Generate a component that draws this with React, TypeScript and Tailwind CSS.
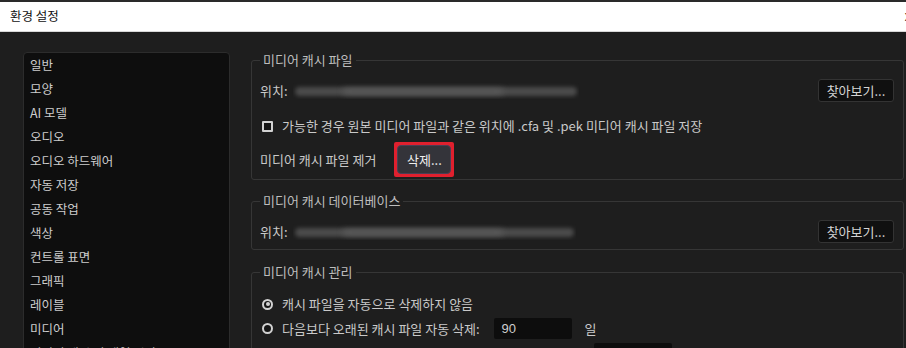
import React from "react";

const font = { fontFamily: '"Noto Sans CJK KR", "Noto Sans", sans-serif' };

const navItems = [
  "일반",
  "모양",
  "AI 모델",
  "오디오",
  "오디오 하드웨어",
  "자동 저장",
  "공동 작업",
  "색상",
  "컨트롤 표면",
  "그래픽",
  "레이블",
  "미디어",
  "미디어 캐시 및 배열 시간",
];

function BlurPath({ w }: { w: number }) {
  return (
    <div className="relative h-[16px] overflow-hidden" style={{ width: w }}>
      <div className="absolute inset-x-[2px] top-[4px] h-[9px] rounded-full bg-[#4c4c4c] blur-[2px]" />
      <div className="absolute left-[50px] top-[6px] h-[5px] w-[160px] rounded-full bg-[#5e5e5e] blur-[3px]" />
    </div>
  );
}

function BrowseButton() {
  return (
    <div className="ml-auto mr-[1px] flex h-[23px] w-[76px] items-center justify-center rounded-[3px] border border-[#333] bg-[#101010] text-[13px] text-[#d4d4d4]">
      찾아보기...
    </div>
  );
}

export default function App() {
  return (
    <div
      className="w-[906px] h-[348px] overflow-hidden bg-[#1e1e1e] text-[13px] text-[#c9c9c9]"
      style={font}
    >
      <div className="flex h-[32px] items-center justify-between border-t-2 border-t-[#2a2a2a] border-b border-b-[#d8d8d8] bg-white pl-[10px] text-[12.5px] text-[#111]">
        <span>환경 설정</span>
        <span className="mr-[-5px] text-[11px]">X</span>
      </div>
      <div className="flex pt-[20px]">
        <div className="ml-[23px] h-[320px] w-[207px] shrink-0 rounded-[4px] border border-[#2c2c2c] bg-[#0e0e0e] pl-[6px]">
          {navItems.map((t) => (
            <div key={t} className="flex h-[24px] items-center text-[12.5px] text-[#cdcdcd]">
              {t}
            </div>
          ))}
        </div>
        <div className="ml-[21px] mr-[2px] flex-1">
          <fieldset className="rounded-[3px] border border-[#363636] px-[8px] pb-[2px]">
            <legend className="px-[3px] leading-[16px] text-[#bdbdbd]">미디어 캐시 파일</legend>
            <div className="mt-[11px] flex h-[23px] items-center">
              <span className="text-[#c9c9c9]">위치:</span>
              <div className="ml-[5px]">
                <BlurPath w={286} />
              </div>
              <BrowseButton />
            </div>
            <div className="mt-[13px] flex h-[22px] items-center">
              <div className="ml-[2px] h-[11px] w-[11px] rounded-[1px] border-2 border-[#d2d2d2] bg-[#151515]" />
              <span className="ml-[9px]">가능한 경우 원본 미디어 파일과 같은 위치에 .cfa 및 .pek 미디어 캐시 파일 저장</span>
            </div>
            <div className="mt-[5px] flex h-[35px] items-center">
              <span>미디어 캐시 파일 제거</span>
              <div className="ml-[18px] flex h-[35px] w-[60px] items-center justify-center rounded-[2px] bg-[#e0202e] p-[3px]">
                <div className="flex h-full w-full items-center justify-center rounded-[4px] border border-[#4a3f55] bg-[#34343a] text-[13px] text-[#eeeeee]">
                  삭제...
                </div>
              </div>
            </div>
          </fieldset>
          <fieldset className="mt-[13px] rounded-[3px] border border-[#363636] px-[8px] pb-[6px]">
            <legend className="px-[3px] leading-[16px] text-[#bdbdbd]">미디어 캐시 데이터베이스</legend>
            <div className="mt-[11px] flex h-[23px] items-center">
              <span>위치:</span>
              <div className="ml-[5px]">
                <BlurPath w={283} />
              </div>
              <BrowseButton />
            </div>
          </fieldset>
          <fieldset className="mt-[14px] rounded-[3px] border border-[#363636] px-[8px] pb-[6px]">
            <legend className="px-[3px] leading-[16px] text-[#bdbdbd]">미디어 캐시 관리</legend>
            <div className="mt-[14px] flex h-[20px] items-center">
              <div className="ml-[2px] flex h-[11px] w-[11px] items-center justify-center rounded-full border-2 border-[#d2d2d2] bg-[#151515]">
                <div className="h-[4px] w-[4px] rounded-full bg-[#d2d2d2]" />
              </div>
              <span className="ml-[9px]">캐시 파일을 자동으로 삭제하지 않음</span>
            </div>
            <div className="mt-[4px] flex h-[21px] items-center">
              <div className="ml-[2px] h-[11px] w-[11px] rounded-full border-2 border-[#d2d2d2] bg-[#151515]" />
              <span className="ml-[9px]">다음보다 오래된 캐시 파일 자동 삭제:</span>
              <div className="ml-[14px] flex h-[21px] w-[78px] items-center rounded-[2px] bg-[#0d0d0d] pl-[8px] text-[#cfcfcf]" style={{ fontFamily: '"Liberation Sans", sans-serif' }}>
                90
              </div>
              <span className="ml-[13px]">일</span>
            </div>
            <div className="mt-[4px] flex h-[21px] items-center">
              <div className="ml-[2px] h-[11px] w-[11px] rounded-full border-2 border-[#d2d2d2] bg-[#151515]" />
              <span className="ml-[9px]">캐시가 다음을 초과하면 가장 오래된 캐시 파일 자동 삭제:</span>
              <div className="ml-[10px] h-[21px] w-[78px] rounded-[2px] bg-[#0d0d0d]" />
            </div>
          </fieldset>
        </div>
      </div>
    </div>
  );
}
